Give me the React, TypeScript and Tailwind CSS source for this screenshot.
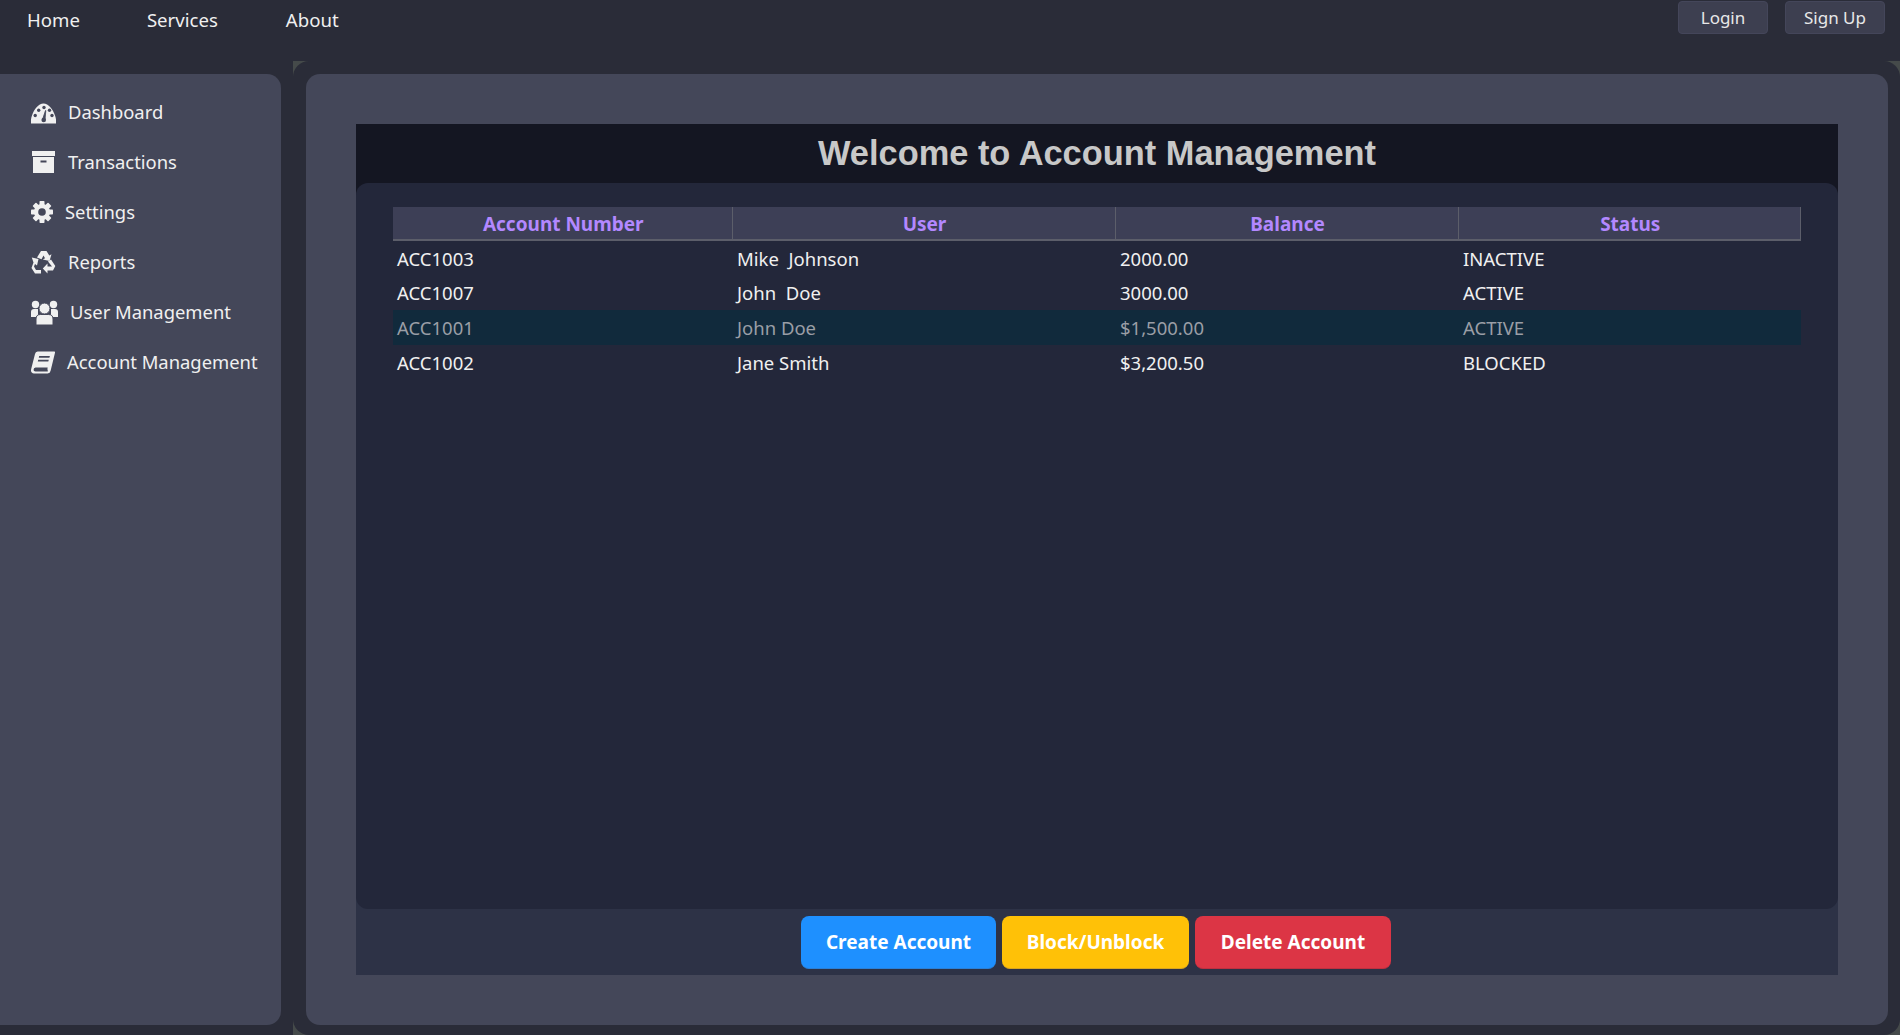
import React from 'react';

const panel = '#444759';

const GaugeIcon = () => (
  <svg viewBox="0 0 25 24" className="h-[24px] w-[25px]">
    <path d="M0 23.500C-.3 21 0 18 1 15.500 3 9.500 7.500 3.500 12.500 3.500S22 9.500 24 15.500c1 2.500 1.300 5.500 1 8H0Z" fill="currentColor" />
    <g fill={panel}>
      <circle cx="4.200" cy="15.500" r="1.700" />
      <circle cx="7.700" cy="10.200" r="1.700" />
      <circle cx="13" cy="7.500" r="1.700" />
      <circle cx="18.500" cy="10.200" r="1.700" />
      <circle cx="21" cy="15.500" r="1.700" />
      <circle cx="12.700" cy="20" r="2.300" />
      <path d="M11.500 19.500L14.500 10.500L14.800 10.600L14 20Z" stroke={panel} strokeWidth="0.8" />
    </g>
  </svg>
);

const ArchiveIcon = () => (
  <svg viewBox="0 0 25 24" className="h-[24px] w-[25px]" fill="currentColor">
    <rect x="1" y="1" width="23" height="5" />
    <path fillRule="evenodd" d="M2 7H23V23H2ZM9.500 10.500V12.500H15.500V10.500Z" />
  </svg>
);

const GearIcon = () => (
  <svg viewBox="0 0 22 22" className="h-[22px] w-[22px]" fill="currentColor">
    <rect x="8.500" y="0" width="5" height="22" rx="0.800" />
    <rect x="8.500" y="0" width="5" height="22" rx="0.800" transform="rotate(45 11 11)" />
    <rect x="8.500" y="0" width="5" height="22" rx="0.800" transform="rotate(90 11 11)" />
    <rect x="8.500" y="0" width="5" height="22" rx="0.800" transform="rotate(135 11 11)" />
    <circle cx="11" cy="11" r="8" />
    <circle cx="11" cy="11" r="3.800" fill={panel} />
  </svg>
);

const RecycleIcon = () => (
  <svg viewBox="0 0 25 24" className="h-[24px] w-[25px]" fill="currentColor">
    <path d="M6 7.500L10 1H15.500L18.300 5.500L20.500 4.200L18.500 11L11.800 9.600L14 8.200L12.500 5.500L10.500 9.200Z" />
    <path d="M20 9.500L24.300 16L22 20.500H16.500V23.500L11.800 18.500L16.500 13.500V16.500H21L17 11.500Z" />
    <path d="M0.800 7.500L7.500 9L6 15.500L4 14L3 16.500L5 20H10V23.500H4L0.500 18L2.500 12.500Z" />
  </svg>
);

const UsersIcon = () => (
  <svg viewBox="0 0 27 27" className="h-[27px] w-[27px]" fill="currentColor">
    <circle cx="4.500" cy="5.500" r="3.700" />
    <circle cx="22.500" cy="5.500" r="3.700" />
    <path d="M0 18V13Q0 10 3 10H7V18Z" />
    <path d="M27 18V13Q27 10 24 10H20V18Z" />
    <circle cx="13.500" cy="9.500" r="5.500" stroke={panel} strokeWidth="1" />
    <path d="M5 26V20Q5 15.500 9.500 15.500H17.500Q22 15.500 22 20V26Z" stroke={panel} strokeWidth="1" />
  </svg>
);

const BookIcon = () => (
  <svg viewBox="0 0 24 23" className="h-[23px] w-[24px]" fill="currentColor">
    <path fillRule="evenodd" d="M6.600 0.500H23a1 1 0 0 1 1 1.300L19.600 19.800a3.200 3.200 0 0 1-3 2.700H3a3 3 0 0 1-3-3.400C0.200 17.800 0.400 17 0.700 16L4 3a3.400 3.400 0 0 1 2.600-2.500ZM8.200 5l-.4 1.800h10.600l.5-1.800H8.200ZM7.200 8.800l-.4 1.700h10.500l.5-1.700H7.200ZM4.500 16.600a2.200 2.200 0 0 0-1.900 2.200c0 1 .8 1.700 1.900 1.700h12.200c.2-.5.1-1-.1-1.500-.2-.6-.2-1.400.1-2.400H4.500Z" />
  </svg>
);

const navLinks = [
  { label: 'Home', cls: 'ml-[27px]' },
  { label: 'Services', cls: 'ml-[67px]' },
  { label: 'About', cls: 'ml-[68px]' },
];

const menu = [
  { label: 'Dashboard', icon: <GaugeIcon /> },
  { label: 'Transactions', icon: <ArchiveIcon /> },
  { label: 'Settings', icon: <GearIcon /> },
  { label: 'Reports', icon: <RecycleIcon /> },
  { label: 'User Management', icon: <UsersIcon /> },
  { label: 'Account Management', icon: <BookIcon /> },
];

const rows = [
  { acc: 'ACC1003', user: 'Mike  Johnson', bal: '2000.00', status: 'INACTIVE', selected: false },
  { acc: 'ACC1007', user: 'John  Doe', bal: '3000.00', status: 'ACTIVE', selected: false },
  { acc: 'ACC1001', user: 'John Doe', bal: '$1,500.00', status: 'ACTIVE', selected: true },
  { acc: 'ACC1002', user: 'Jane Smith', bal: '$3,200.50', status: 'BLOCKED', selected: false },
];

const headers = ['Account Number', 'User', 'Balance', 'Status'];

export default function App() {
  return (
    <div className="h-[1035px] w-[1900px] overflow-hidden flex flex-col bg-[#2a2c38] text-white font-['Noto_Sans',sans-serif]">
      <header className="h-[61px] flex justify-between items-start shrink-0">
        <nav className="flex pt-[6px] text-[18.6px] leading-[28px] text-[#f0f0f0]">
          {navLinks.map((l) => (
            <a key={l.label} className={l.cls}>{l.label}</a>
          ))}
        </nav>
        <div className="flex gap-[17px] pt-px pr-[15px]">
          <button className="w-[90px] h-[33px] rounded-[4px] border border-[#44465a] bg-[#3d3f50] text-[17px] text-[#e8e8e8]">Login</button>
          <button className="w-[100px] h-[33px] rounded-[4px] border border-[#44465a] bg-[#3d3f50] text-[17px] text-[#e8e8e8]">Sign Up</button>
        </div>
      </header>

      <div className="flex-1 flex min-h-0">
        <div className="w-[293px] pt-[13px] pb-[10px] pr-[12px] shrink-0">
          <aside className="h-full rounded-r-[14px] bg-[#444759] pl-[31px] pt-[13px]">
            {menu.map((m) => (
              <div key={m.label} className="h-[50px] flex items-center text-[18.4px] text-[#f0f0f0]">
                {m.icon}
                <span className="ml-[12px]">{m.label}</span>
              </div>
            ))}
          </aside>
        </div>

        <div className="flex-1 bg-[#454a4a]">
          <div className="h-full rounded-[16px] bg-[#2a2c38] pt-[13px] pb-[10px] pl-[13px] pr-[12px]">
            <main className="h-full rounded-[14px] bg-[#444759] px-[50px] py-[50px]">
              <div className="h-full flex flex-col bg-[#141622]">
                <h1 className="h-[59px] shrink-0 flex items-center justify-center pt-px font-['Liberation_Sans',sans-serif] font-bold text-[34.4px] text-[#c8c8c8]">
                  Welcome to Account Management
                </h1>
                <div className="flex-1 flex flex-col bg-[linear-gradient(to_bottom,#141622_50%,#2d3246_50%)]">
                  <div className="flex-1 rounded-[12px] bg-[#23273a] px-[37px] pt-[24px]">
                    <table className="w-full table-fixed border-collapse text-[18.5px] text-[#f0f0f0]">
                      <colgroup>
                        <col className="w-[339px]" />
                        <col className="w-[383px]" />
                        <col className="w-[343px]" />
                        <col />
                      </colgroup>
                      <thead>
                        <tr className="h-[33px] bg-[#3d3f56] border-b-2 border-[#5c5e6a]">
                          {headers.map((h) => (
                            <th key={h} className="border-r border-[#5c5e6a] font-bold text-[19px] text-[#b388ff] text-center p-0 pt-[2px] pl-[2px]">{h}</th>
                          ))}
                        </tr>
                      </thead>
                      <tbody>
                        {rows.map((r) => (
                          <tr key={r.acc} className={r.selected ? 'h-[35px] bg-[#112a3c] text-[#9a9ea6]' : 'h-[35px]'}>
                            <td className="pl-[4px] pt-[1px] whitespace-pre">{r.acc}</td>
                            <td className="pl-[5px] pt-[1px] whitespace-pre">{r.user}</td>
                            <td className="pl-[5px] pt-[1px] whitespace-pre">{r.bal}</td>
                            <td className="pl-[5px] pt-[1px] whitespace-pre">{r.status}</td>
                          </tr>
                        ))}
                      </tbody>
                    </table>
                  </div>
                </div>
                <div className="h-[66px] shrink-0 bg-[#2d3246] flex justify-center items-start pt-[7px] pr-[2px] gap-[6px] text-[19px] font-bold">
                  <button className="w-[195px] h-[53px] rounded-[8px] border-b border-[#2a80d8] bg-[#1e90ff]">Create Account</button>
                  <button className="w-[187px] h-[53px] rounded-[8px] border-b border-[#d8a520] bg-[#ffc107]">Block/Unblock</button>
                  <button className="w-[196px] h-[53px] rounded-[8px] border-b border-[#bf3040] bg-[#dc3545]">Delete Account</button>
                </div>
              </div>
            </main>
          </div>
        </div>
      </div>
    </div>
  );
}
